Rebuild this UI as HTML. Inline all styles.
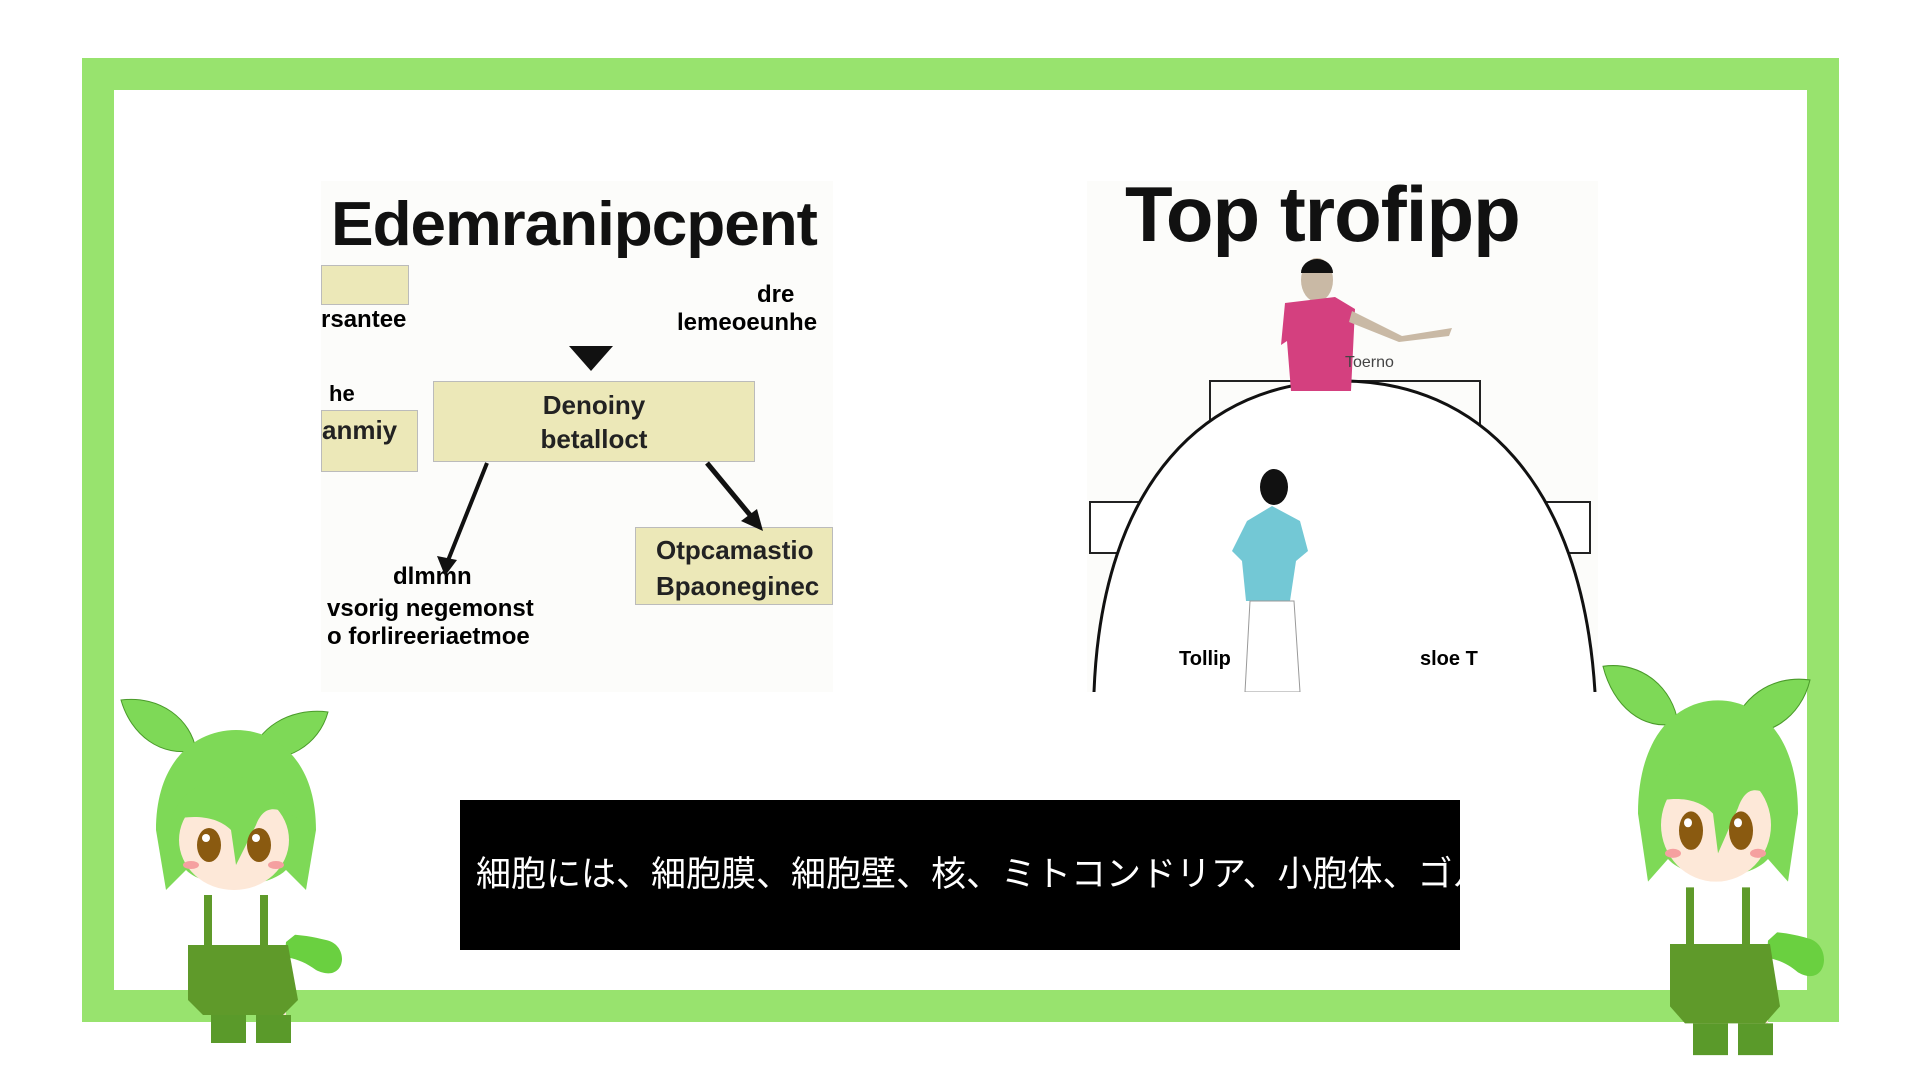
<!DOCTYPE html>
<html><head><meta charset="utf-8"><style>
body{margin:0;width:1920px;height:1080px;background:#fff;position:relative;overflow:hidden;font-family:"Liberation Sans",sans-serif}
.frame{position:absolute;left:82px;top:58px;width:1693px;height:900px;border:32px solid #98e36e;background:#fff}
.img{position:absolute;background:#fcfcfa}
.box{position:absolute;background:#ece8b8;border:1px solid #bbb;font-weight:bold;color:#222}
.cap{position:absolute;left:460px;top:800px;width:1000px;height:150px;background:#000;color:#fff;overflow:hidden;white-space:nowrap;font:35px "Liberation Sans","Noto Sans CJK JP",sans-serif;line-height:150px;padding-left:16px;box-sizing:border-box}
svg.ch{position:absolute}
</style></head><body>
<div class="frame"></div>
<div class="img" style="left:321px;top:181px;width:512px;height:511px">
 <div style="position:absolute;left:10px;top:8px;font-size:62px;font-weight:bold;color:#111;letter-spacing:-1px;transform:scaleX(1.03);transform-origin:left">Edemranipcpent</div>
 <div class="box" style="left:0;top:84px;width:86px;height:38px"></div>
 <div style="position:absolute;left:0;top:125px;font-size:24px;font-weight:bold">rsantee</div>
 <div style="position:absolute;left:436px;top:100px;font-size:24px;font-weight:bold">dre</div>
 <div style="position:absolute;left:356px;top:128px;font-size:24px;font-weight:bold">lemeoeunhe</div>
 <div style="position:absolute;left:8px;top:200px;font-size:22px;font-weight:bold">he</div>
 <div class="box" style="left:0;top:229px;width:95px;height:56px;font-size:26px;padding-top:4px">anmiy</div>
 <div class="box" style="left:112px;top:200px;width:322px;height:81px;font-size:26px;text-align:center;line-height:34px;padding-top:6px;box-sizing:border-box">Denoiny<br>betalloct</div>
 <div class="box" style="left:314px;top:346px;width:198px;height:78px;font-size:26px;line-height:36px;padding:4px 0 0 20px;box-sizing:border-box">Otpcamastio<br>Bpaoneginec</div>
 <div style="position:absolute;left:72px;top:382px;font-size:24px;font-weight:bold">dlmmn</div>
 <div style="position:absolute;left:6px;top:414px;font-size:24px;font-weight:bold;line-height:28px">vsorig negemonst<br>o forlireeriaetmoe</div>
 <svg style="position:absolute;left:0;top:0" width="512" height="511"><path d="M248 165l22 25 22-25z" fill="#111"/><path d="M166 282l-40 100" stroke="#111" stroke-width="4"/><path d="M116 375l8 20 12-16z" fill="#111"/><path d="M386 282l48 58" stroke="#111" stroke-width="5"/><path d="M420 340l22 10-6-22z" fill="#111"/></svg>
</div>
<div class="img" style="left:1087px;top:181px;width:511px;height:511px">
 <div style="position:absolute;left:38px;top:-12px;font-size:78px;font-weight:bold;color:#111;letter-spacing:-1px">Top trofipp</div>
 <svg style="position:absolute;left:0;top:0" width="511" height="511">
  <rect x="123" y="200" width="270" height="170" fill="none" stroke="#222" stroke-width="2"/>
  <rect x="3" y="321" width="500" height="51" fill="#fff" stroke="#222" stroke-width="2"/>
  <path d="M7 511C15 300 120 200 255 200S495 300 508 511" fill="#fff" stroke="#111" stroke-width="3"/>
  <ellipse cx="230" cy="99" rx="16" ry="22" fill="#c9b9a5"/><path d="M214 92a16 14 0 0 1 32 0z" fill="#111"/>
  <path d="M198 122l50-6 20 12-4 82h-60l-4-50-6 4z" fill="#d4407f"/>
  <path d="M265 130l50 25 50-8-3 8-50 6-50-20z" fill="#c9b9a5"/>
  <ellipse cx="187" cy="306" rx="14" ry="18" fill="#111"/>
  <path d="M160 340l25-15 28 15 8 30-12 10-6 40h-44l-4-40-10-10z" fill="#73c8d5"/>
  <path d="M163 420h44l6 91h-55z" fill="#fff" stroke="#999"/>
 </svg>
 <div style="position:absolute;left:92px;top:467px;font-size:20px;font-weight:bold">Tollip</div>
 <div style="position:absolute;left:333px;top:467px;font-size:20px;font-weight:bold">sloe T</div>
 <div style="position:absolute;left:258px;top:173px;font-size:16px;color:#444">Toerno</div>
</div>
<div class="cap">細胞には、細胞膜、細胞壁、核、ミトコンドリア、小胞体、ゴルジ体</div>
<svg width="0" height="0" style="position:absolute"><defs><symbol id="zm" viewBox="0 0 230 360" preserveAspectRatio="none">
 <path d="M5 10c40 -5 70 20 75 50-35 8-65-15-75-50z" fill="#7ed957" stroke="#4a9a2a"/>
 <path d="M212 22c-40-5-72 18-77 45 35 8 68-12 77-45z" fill="#7ed957" stroke="#4a9a2a"/>
 <path d="M140 300h30v30h-30zM100 300h30v30h-30z" fill="#fbe5d6"/>
 <path d="M95 325h35v28h-35zM140 325h35v28h-35z" fill="#5a9a2a"/>
 <path d="M130 250c30-10 60-5 80 0 25 5 20 45-10 30-20-15-40-15-70-15z" fill="#6ad040"/>
 <path d="M80 205h85l20 35-15 12-5 60h-85l-5-60-15-12z" fill="#fff"/>
 <path d="M72 255h100l10 55-15 15h-80l-15-15z" fill="#5f9a2a"/>
 <path d="M92 205v55M148 205v55" stroke="#5f9a2a" stroke-width="8"/>
 <path d="M40 140c0-70 40-100 80-100s80 30 80 100l-10 60-20-20c-20 20-80 20-100 0l-20 20z" fill="#7ed957"/>
 <ellipse cx="118" cy="150" rx="55" ry="50" fill="#fde8d8"/>
 <path d="M55 130c15-55 110-60 130 0-20-10-35-20-45 5l-20 40-5-35c-15-15-40-15-60-10z" fill="#7ed957"/>
 <ellipse cx="93" cy="155" rx="12" ry="17" fill="#8a5a10"/><ellipse cx="143" cy="155" rx="12" ry="17" fill="#8a5a10"/>
 <circle cx="90" cy="148" r="4" fill="#fff"/><circle cx="140" cy="148" r="4" fill="#fff"/>
 <ellipse cx="75" cy="175" rx="8" ry="4" fill="#f5a0a0"/><ellipse cx="160" cy="175" rx="8" ry="4" fill="#f5a0a0"/>
</symbol></defs></svg>
<svg class="ch" style="left:116px;top:690px" width="230" height="360"><use href="#zm" width="230" height="360"/></svg>
<svg class="ch" style="left:1598px;top:655px" width="230" height="408"><use href="#zm" width="230" height="408"/></svg>
</body></html>
